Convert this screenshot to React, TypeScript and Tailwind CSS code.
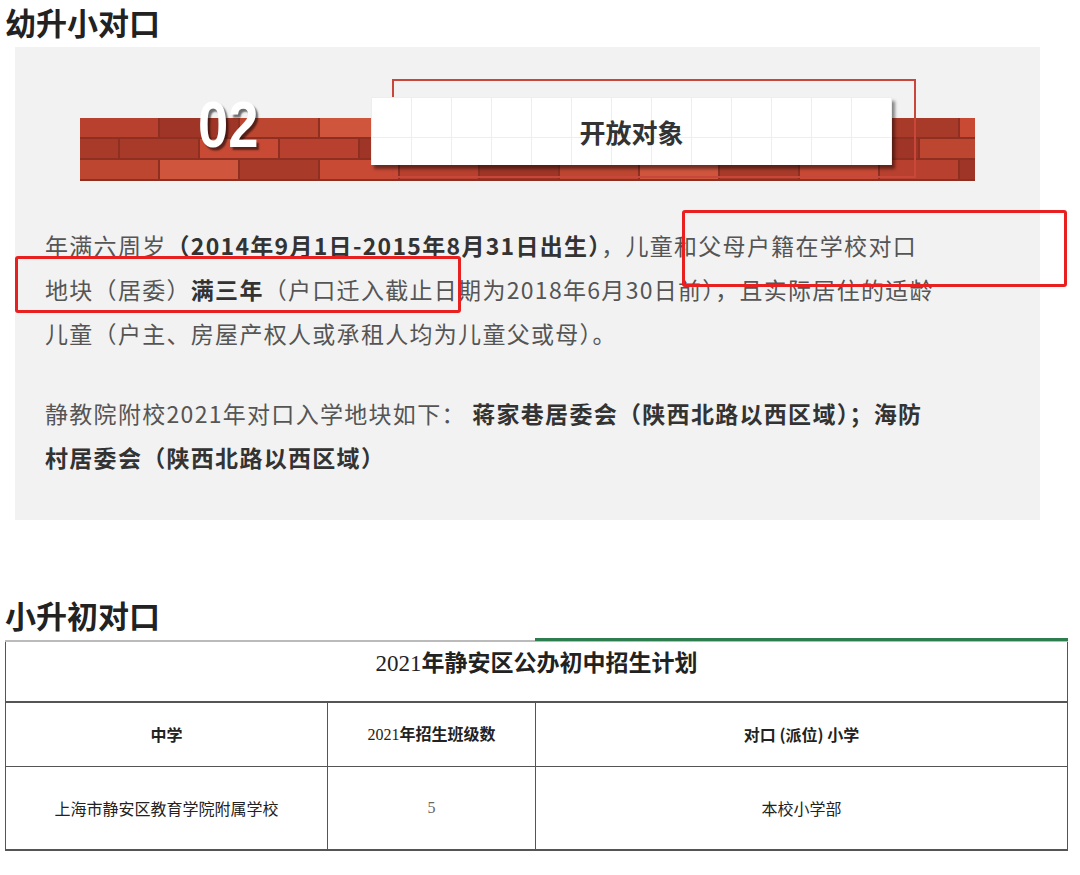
import React from 'react'

const brickColors = ['bg-[#b8402e]', 'bg-[#c84a35]', 'bg-[#a83a2a]', 'bg-[#d0553d]', 'bg-[#bd4631]', 'bg-[#9e3526]']

function BrickRow({ offset, seed }: { offset: boolean; seed: number }) {
  const bricks = Array.from({ length: 12 })
  return (
    <div className="flex h-[21px] gap-[2px] overflow-hidden border-b-2 border-[#8e2f22]">
      {offset && <div className={`h-full w-[38px] shrink-0 ${brickColors[seed % 6]}`} />}
      {bricks.map((_, i) => (
        <div key={i} className={`h-full w-[78px] shrink-0 ${brickColors[(i * 5 + seed) % 6]}`} />
      ))}
    </div>
  )
}

export default function App() {
  const font = { fontFamily: '"Noto Sans CJK SC", "Noto Sans", sans-serif' }
  return (
    <div className="h-[875px] w-[1080px] overflow-hidden bg-white" style={font}>
      <h1 className="pl-[5px] pt-[2px] text-[31px] font-bold leading-[40px] text-[#222]">幼升小对口</h1>

      <div className="relative ml-[15px] mt-[5px] h-[473px] w-[1025px] bg-[#f2f2f2]">
        {/* banner */}
        <div className="relative ml-[65px] h-[134px] w-[895px] pt-[71px]">
          <div className="bg-[#8e2f22]">
            <BrickRow offset={false} seed={0} />
            <BrickRow offset={true} seed={2} />
            <BrickRow offset={false} seed={4} />
          </div>
          <div className="absolute left-[312px] top-[32px] h-[99px] w-[524px] border-2 border-[#c9463b]" />
          <div className="absolute left-[291px] top-[50px] flex h-[68px] w-[521px] items-center justify-center bg-white bg-[linear-gradient(#eee_1px,transparent_1px),linear-gradient(90deg,#eee_1px,transparent_1px)] bg-[size:40px_40px] shadow-[3px_4px_3px_rgba(0,0,0,0.45)]">
            <span className="text-[26px] font-bold text-[#333]">开放对象</span>
          </div>
          <div className="absolute left-[118px] top-[46px] origin-left scale-x-[0.85] text-[64px] font-bold leading-none text-white [text-shadow:3px_3px_2px_rgba(0,0,0,0.55)]" style={{ fontFamily: '"Liberation Sans", sans-serif' }}>
            02
          </div>
        </div>

        <div className="whitespace-nowrap px-[30px] pt-[42px] text-[23px] leading-[44px] tracking-[1.3px] text-[#555]">
          <p>
            年满六周岁<b className="text-[#333]">（2014年9月1日-2015年8月31日出生）</b>，儿童和父母户籍在学校对口
            <br />
            地块（居委）<b className="text-[#333]">满三年</b>（户口迁入截止日期为2018年6月30日前），且实际居住的适龄
            <br />
            儿童（户主、房屋产权人或承租人均为儿童父或母）。
          </p>
          <p className="mt-[36px]">
            静教院附校2021年对口入学地块如下： <b className="text-[#333]">蒋家巷居委会（陕西北路以西区域）；海防</b>
            <br />
            <b className="text-[#333]">村居委会（陕西北路以西区域）</b>
          </p>
        </div>

        <div className="absolute left-[667px] top-[163px] h-[77px] w-[385px] rounded-[3px] border-[3px] border-[#e8201f]" />
        <div className="absolute left-0 top-[209px] h-[57px] w-[446px] rounded-[3px] border-[3px] border-[#e8201f]" />
      </div>

      <h2 className="mt-[75px] pl-[5px] text-[31px] font-bold leading-[40px] text-[#222]">小升初对口</h2>

      <div className="relative ml-[5px] mt-[5px] w-[1063px]">
        <div className="absolute left-[530px] top-[-2px] h-[3px] w-[533px] bg-[#2e7d4f]" />
        <table className="w-full border-collapse text-[#222]" style={{ fontFamily: '"Noto Sans CJK SC", "Liberation Serif", serif' }}>
          <tbody>
            <tr className="h-[61px] border-t-2 border-[#bbb]">
              <td colSpan={3} className="border-x border-b-2 border-[#555] pb-[10px] pt-[2px] text-center align-top text-[23px] font-bold">
                <span style={{ fontFamily: '"Liberation Serif", serif' }} className="font-normal">2021</span>年静安区公办初中招生计划
              </td>
            </tr>
            <tr className="h-[64px] text-[16px] font-bold">
              <td className="w-[322px] border border-[#555] text-center">中学</td>
              <td className="w-[208px] border border-[#555] text-center"><span className="font-normal" style={{ fontFamily: '"Liberation Serif", serif' }}>2021</span>年招生班级数</td>
              <td className="border border-[#555] text-center">对口 (派位) 小学</td>
            </tr>
            <tr className="h-[84px] text-[16px]">
              <td className="border border-b-2 border-[#555] text-center">上海市静安区教育学院附属学校</td>
              <td className="border border-b-2 border-[#555] text-center text-[#666]" style={{ fontFamily: '"Liberation Serif", serif' }}>5</td>
              <td className="border border-b-2 border-[#555] text-center">本校小学部</td>
            </tr>
          </tbody>
        </table>
      </div>
    </div>
  )
}
